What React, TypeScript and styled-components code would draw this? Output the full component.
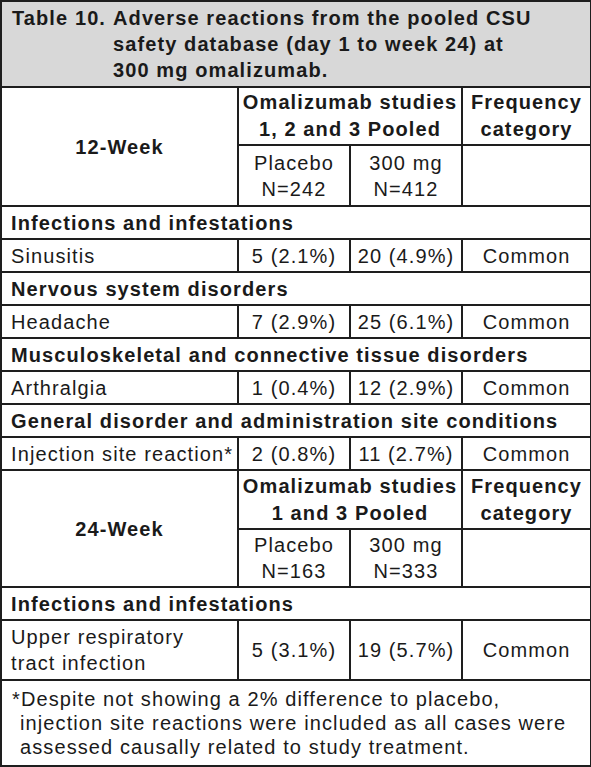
import { Fragment } from 'react';
import styled, { createGlobalStyle } from 'styled-components';

const GlobalStyle = createGlobalStyle`
  html, body {
    margin: 0;
    padding: 0;
    background: #ffffff;
  }
  body {
    font-family: 'Liberation Sans', Arial, Helvetica, sans-serif;
    color: #1a1a1a;
  }
`;

const line = '2px solid #1e1e1e';

const Table = styled.table`
  width: 590px;
  table-layout: fixed;
  border-collapse: collapse;
  border: ${line};
  font-size: 20px;
  letter-spacing: 1.1px;
  line-height: 26px;
`;

const TitleCell = styled.td`
  height: 72px;
  padding: 3px 10px 3px;
  background-color: #d8d8d8;
  border: ${line};
  font-weight: 700;
  vertical-align: top;
`;

const TitleFlex = styled.div`
  display: flex;
  gap: 7px;
`;

const Cell = styled.td<{ $align?: 'left' | 'center'; $bold?: boolean; $h?: number }>`
  height: ${(p) => (p.$h ? `${p.$h}px` : 'auto')};
  padding: ${(p) => (p.$align === 'left' ? '0 6px 0 9px' : '0 3px')};
  border: ${line};
  text-align: ${(p) => p.$align ?? 'center'};
  font-weight: ${(p) => (p.$bold ? 700 : 400)};
  vertical-align: middle;
  white-space: nowrap;
`;

const HeadLines = styled.div`
  line-height: 27px;
`;

const Footnote = styled.td`
  height: 74px;
  padding: 6px 10px 4px 18px;
  border: ${line};
  text-indent: -8px;
  line-height: 24px;
  vertical-align: top;
`;

type Row = [string, string, string, string];

interface Section {
  title: string;
  rows: Row[];
}

interface Block {
  period: string;
  studies: [string, string];
  placebo: string;
  dose: string;
  heights: [number, number];
  sections: Section[];
}

const blocks: Block[] = [
  {
    period: '12-Week',
    studies: ['Omalizumab studies', '1, 2 and 3 Pooled'],
    placebo: 'N=242',
    dose: 'N=412',
    heights: [56, 59],
    sections: [
      { title: 'Infections and infestations', rows: [['Sinusitis', '5 (2.1%)', '20 (4.9%)', 'Common']] },
      { title: 'Nervous system disorders', rows: [['Headache', '7 (2.9%)', '25 (6.1%)', 'Common']] },
      {
        title: 'Musculoskeletal and connective tissue disorders',
        rows: [['Arthralgia', '1 (0.4%)', '12 (2.9%)', 'Common']],
      },
      {
        title: 'General disorder and administration site conditions',
        rows: [['Injection site reaction*', '2 (0.8%)', '11 (2.7%)', 'Common']],
      },
    ],
  },
  {
    period: '24-Week',
    studies: ['Omalizumab studies', '1 and 3 Pooled'],
    placebo: 'N=163',
    dose: 'N=333',
    heights: [57, 56],
    sections: [
      {
        title: 'Infections and infestations',
        rows: [['Upper respiratory\ntract infection', '5 (3.1%)', '19 (5.7%)', 'Common']],
      },
    ],
  },
];

function Lines({ text }: { text: string }) {
  const parts = text.split('\n');
  return (
    <>
      {parts.map((p, i) => (
        <span key={i}>
          {p}
          {i < parts.length - 1 && <br />}
        </span>
      ))}
    </>
  );
}

export default function App() {
  return (
    <>
      <GlobalStyle />
      <Table>
        <colgroup>
          <col style={{ width: 237 }} />
          <col style={{ width: 112 }} />
          <col style={{ width: 112 }} />
          <col style={{ width: 129 }} />
        </colgroup>
        <tbody>
          <tr>
            <TitleCell colSpan={4}>
              <TitleFlex>
                <span>Table&nbsp;10.</span>
                <span>
                  Adverse reactions from the pooled CSU
                  <br />
                  safety database (day 1 to week 24) at
                  <br />
                  300 mg omalizumab.
                </span>
              </TitleFlex>
            </TitleCell>
          </tr>
          {blocks.map((b) => (
            <Fragment key={b.period}>
              <tr>
                <Cell rowSpan={2} $bold>
                  {b.period}
                </Cell>
                <Cell colSpan={2} $bold $h={b.heights[0]}>
                  <HeadLines>
                    {b.studies[0]}
                    <br />
                    {b.studies[1]}
                  </HeadLines>
                </Cell>
                <Cell $bold>
                  <HeadLines>
                    Frequency
                    <br />
                    category
                  </HeadLines>
                </Cell>
              </tr>
              <tr>
                <Cell $h={b.heights[1]}>
                  Placebo
                  <br />
                  {b.placebo}
                </Cell>
                <Cell>
                  300 mg
                  <br />
                  {b.dose}
                </Cell>
                <Cell />
              </tr>
              {b.sections.map((s) => (
                <Fragment key={s.title}>
                  <tr>
                    <Cell colSpan={4} $align="left" $bold $h={31}>
                      {s.title}
                    </Cell>
                  </tr>
                  {s.rows.map((r) => (
                    <tr key={r[0]}>
                      <Cell $align="left" $h={r[0].includes('\n') ? 58 : 31}>
                        <Lines text={r[0]} />
                      </Cell>
                      <Cell>{r[1]}</Cell>
                      <Cell>{r[2]}</Cell>
                      <Cell>{r[3]}</Cell>
                    </tr>
                  ))}
                </Fragment>
              ))}
            </Fragment>
          ))}
          <tr>
            <Footnote colSpan={4}>
              *Despite not showing a 2% difference to placebo,
              <br />
              injection site reactions were included as all cases were
              <br />
              assessed causally related to study treatment.
            </Footnote>
          </tr>
        </tbody>
      </Table>
    </>
  );
}
